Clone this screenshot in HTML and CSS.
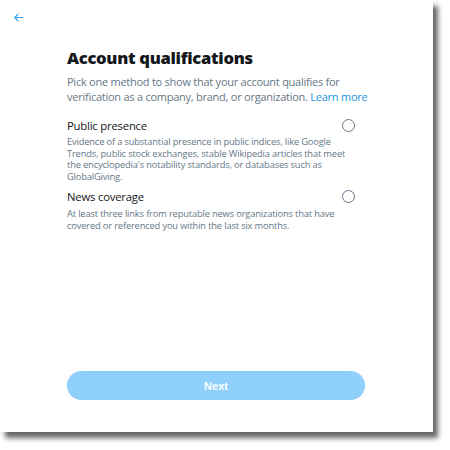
FILE: index.html
```html
<!DOCTYPE html>
<html>
<head>
<meta charset="utf-8">
<link rel="stylesheet" href="styles.css">
</head>
<body>
<div class="panel">
  <div class="topbar">
    <svg class="back" viewBox="0 0 24 24"><path d="M20 11H7.414l4.293-4.293c.39-.39.39-1.023 0-1.414s-1.023-.39-1.414 0l-6 6c-.39.39-.39 1.023 0 1.414l6 6c.195.195.45.293.707.293s.512-.098.707-.293c.39-.39.39-1.023 0-1.414L7.414 13H20c.553 0 1-.447 1-1s-.447-1-1-1z"/></svg>
  </div>
  <div class="content">
    <h1 class="title">Account qualifications</h1>
    <p class="subtitle">Pick one method to show that your account qualifies for verification as a company, brand, or organization. <span class="link">Learn more</span></p>
    <div class="option">
      <div class="option-head">
        <span class="option-title">Public presence</span>
        <span class="radio"></span>
      </div>
      <p class="option-desc">Evidence of a substantial presence in public indices, like Google Trends, public stock exchanges, stable Wikipedia articles that meet the encyclopedia's notability standards, or databases such as GlobalGiving.</p>
    </div>
    <div class="option">
      <div class="option-head">
        <span class="option-title">News coverage</span>
        <span class="radio"></span>
      </div>
      <p class="option-desc">At least three links from reputable news organizations that have covered or referenced you within the last six months.</p>
    </div>
    <div class="spacer"></div>
    <button class="next">Next</button>
  </div>
</div>
</body>
</html>
```

FILE: styles.css
```css
html, body {
  margin: 0;
  padding: 0;
  background: #ffffff;
}
body {
  font-family: "Open Sans", "Noto Sans", sans-serif;
  width: 450px;
  height: 450px;
  overflow: hidden;
}
.panel {
  width: 433px;
  height: 432px;
  background: #ffffff;
  box-shadow: 5px 6px 5px rgba(0, 0, 0, 0.6);
  display: flex;
  flex-direction: column;
  box-sizing: border-box;
}
.topbar {
  height: 34px;
  padding-left: 12px;
  display: flex;
  align-items: center;
}
.back {
  width: 13px;
  height: 13px;
  fill: #2ea3ec;
}
.content {
  flex: 1;
  display: flex;
  flex-direction: column;
  padding-left: 67px;
  width: 298px;
  padding-bottom: 32px;
}
.title {
  margin: 12px 0 0 0;
  font-size: 16.6px;
  line-height: 24px;
  font-weight: 800;
  color: #14171a;
  letter-spacing: -0.3px;
}
.subtitle {
  margin: 4px 0 0 0;
  width: 312px;
  font-size: 11px;
  line-height: 15px;
  letter-spacing: -0.25px;
  color: #657786;
}
.link {
  color: #1b95e0;
}
.option {
  width: 288px;
  margin-top: 13px;
}
.option + .option {
  margin-top: 6px;
}
.option-head {
  display: flex;
  justify-content: space-between;
  align-items: center;
  height: 16px;
}
.option-title {
  font-size: 11.3px;
  letter-spacing: -0.2px;
  color: #14171a;
}
.radio {
  width: 11px;
  height: 11px;
  border: 1.5px solid #657786;
  border-radius: 50%;
}
.option-desc {
  margin: 3px 0 0 0;
  font-size: 9.3px;
  line-height: 11.7px;
  letter-spacing: -0.15px;
  color: #657786;
}
.spacer {
  flex: 1;
}
.next {
  width: 298px;
  height: 29px;
  border: none;
  border-radius: 15px;
  background: #8ed0f9;
  color: #ffffff;
  font-family: "Liberation Sans", Arial, sans-serif;
  font-weight: 700;
  font-size: 11px;
}
```
